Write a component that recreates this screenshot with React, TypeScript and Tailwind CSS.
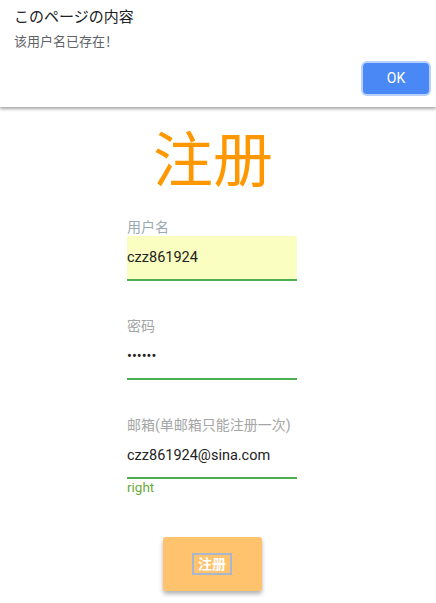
import React from 'react';

const font = { fontFamily: 'Roboto, "Noto Sans CJK SC", sans-serif' };

const Field: React.FC<{ label: string; value: string; filled?: boolean; type?: string; labelClass?: string }> = ({
    label,
    value,
    filled,
    type = 'text',
    labelClass = 'text-[#9aa9b1]',
}) => (
    <div className="w-[170px]">
        <label className={`block text-[14px] leading-[17px] whitespace-nowrap ${labelClass}`}>{label}</label>
        <input
            readOnly
            type={type}
            value={value}
            className={`block w-full h-[45px] border-0 border-b-2 border-[#4caf50] outline-none text-[14.5px] text-[#222] px-0 ${filled ? 'bg-[#fafec0]' : 'bg-white'}`}
            style={font}
        />
    </div>
);

const App: React.FC = () => {
    return (
        <div className="w-[436px] h-[603px] bg-white overflow-hidden relative" style={font}>
            {/* Alert dialog */}
            <div className="absolute top-0 left-0 right-0 h-[107px] bg-white shadow-[0_2px_3px_rgba(0,0,0,0.35)] z-10 px-[14px] pt-[7px]">
                <div className="text-[15px] leading-[20px] text-[#202124]">このページの内容</div>
                <div className="mt-[6px] text-[13px] leading-[17px] text-[#5f6368]">该用户名已存在！</div>
                <div className="flex justify-end mt-[13px] -mr-[7px]">
                    <button className="w-[66px] h-[31px] rounded-[4px] bg-[#4a89f5] text-white text-[14px] ring-2 ring-[#b8d0fb]">
                        OK
                    </button>
                </div>
            </div>

            {/* Register form */}
            <div className="pt-[110px] flex flex-col items-center">
                <h1 className="text-[60px] leading-[80px] text-[#ff9800] mt-[12px] -ml-[10px]">注册</h1>
                <div className="mt-[17px] flex flex-col gap-[37px] ml-[-12px]">
                    <Field label="用户名" value="czz861924" filled />
                    <Field label="密码" value="czz861" type="password" labelClass="text-[#a5a5a5]" />
                    <div>
                        <Field label="邮箱(单邮箱只能注册一次)" value="czz861924@sina.com" labelClass="text-[#a5a5a5]" />
                        <div className="text-[13.5px] leading-[16px] text-[#6aaa3a]">right</div>
                    </div>
                </div>
                <button className="mt-[42px] ml-[-12px] w-[99px] h-[54px] rounded-[3px] bg-[#ffc36e] shadow-[0_3px_4px_rgba(0,0,0,0.3)] flex items-center justify-center">
                    <span className="px-[4px] border-2 border-[#a9b6cf] text-white font-bold text-[14px] leading-[18px]">注册</span>
                </button>
            </div>
        </div>
    );
};

export default App;
